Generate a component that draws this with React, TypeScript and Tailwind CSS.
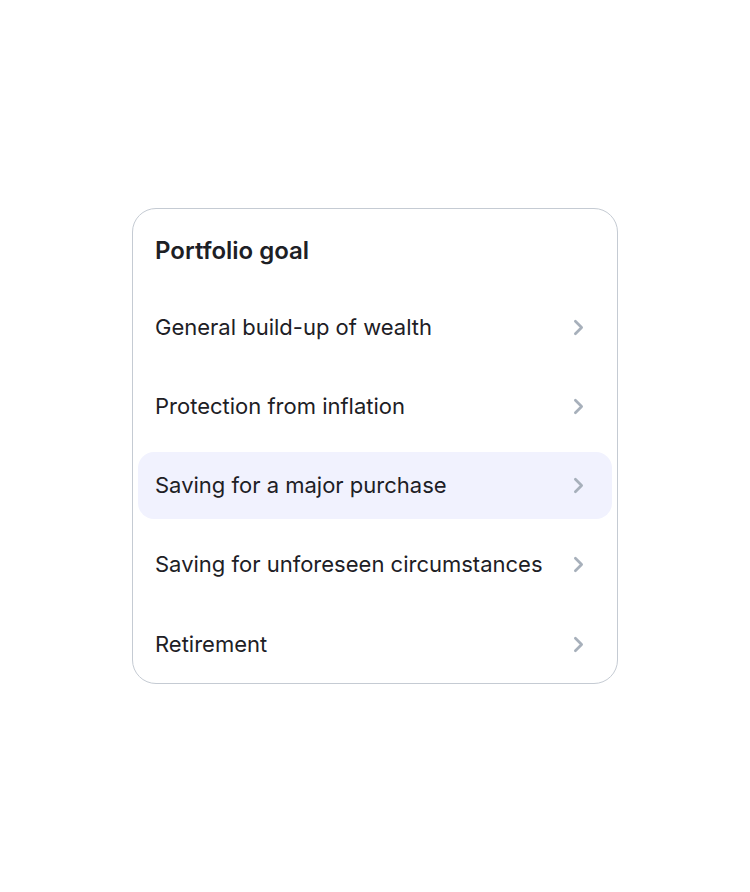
import { ChevronRight } from "lucide-react";

const goals = [
  "General build-up of wealth",
  "Protection from inflation",
  "Saving for a major purchase",
  "Saving for unforeseen circumstances",
  "Retirement",
];

const selected = 2;

export default function App() {
  return (
    <div
      className="flex min-h-screen items-center justify-center bg-white text-[#1d2025]"
      style={{ fontFamily: "Inter, 'Noto Sans', sans-serif" }}
    >
      <div className="flex w-[486px] flex-col gap-[12.25px] rounded-[24px] border border-[#c5cbd3] p-[5px]">
        <div className="flex h-[67px] items-center px-[17px] pt-[7px]">
          <h2 className="text-[24px] font-semibold">Portfolio goal</h2>
        </div>
        {goals.map((goal, i) => (
          <div
            key={goal}
            className={
              "flex h-[67px] items-center justify-between rounded-[16px] pl-[17px] pr-[21px] " +
              (i === selected ? "bg-[#f1f2fe]" : "")
            }
          >
            <span className="text-[22px]">{goal}</span>
            <ChevronRight size={25} strokeWidth={2.6} className="text-[#a7b0bb]" />
          </div>
        ))}
      </div>
    </div>
  );
}
